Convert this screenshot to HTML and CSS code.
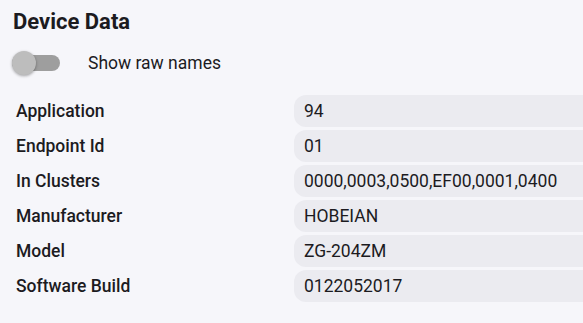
FILE: index.html
```html
<!DOCTYPE html>
<html>
  <head>
    <meta name="viewport" content="width=device-width, initial-scale=1" />
    <link rel="stylesheet" href="styles.css">
  </head>
  <body>
    <div class="panel">
      <h2 class="title">Device Data</h2>

      <label class="switch-row">
        <span class="switch">
          <span class="track"></span>
          <span class="thumb"></span>
        </span>
        <span class="switch-label">Show raw names</span>
      </label>

      <div class="data-grid">
        <div class="key">Application</div>
        <div class="value">94</div>
        <div class="key">Endpoint Id</div>
        <div class="value">01</div>
        <div class="key">In Clusters</div>
        <div class="value">0000,0003,0500,EF00,0001,0400</div>
        <div class="key">Manufacturer</div>
        <div class="value">HOBEIAN</div>
        <div class="key">Model</div>
        <div class="value">ZG-204ZM</div>
        <div class="key">Software Build</div>
        <div class="value">0122052017</div>
      </div>
    </div>
  </body>
</html>
```

FILE: styles.css
```css
body {
  margin: 0;
  font-family: Roboto, "Liberation Sans", sans-serif;
  background-color: #f6f6fa;
  color: #1c1b1f;
}

* {
  box-sizing: border-box;
}

.panel {
  padding: 8px 0 0 0;
}

/* Section heading */
.title {
  margin: 0 0 0 13px;
  font-size: 22px;
  font-weight: 700;
  line-height: 28px;
}

/* Toggle switch */
.switch-row {
  display: flex;
  align-items: center;
  height: 38px;
  margin: 8px 0 13px 12px;
}

.switch {
  position: relative;
  width: 48px;
  height: 24px;
  display: inline-block;
}

.track {
  position: absolute;
  left: 0;
  top: 4px;
  width: 48px;
  height: 16px;
  border-radius: 8px;
  background-color: #9e9e9e;
}

.thumb {
  position: absolute;
  left: 0;
  top: 0;
  width: 24px;
  height: 24px;
  border-radius: 50%;
  background-color: #bdbdbd;
  box-shadow: 0 1px 3px rgba(0, 0, 0, 0.35);
}

.switch-label {
  margin-left: 28px;
  font-size: 17.5px;
}

/* Key / value list */
.data-grid {
  display: grid;
  grid-template-columns: 294px 1fr;
  grid-auto-rows: 32px;
  row-gap: 3px;
  font-size: 17.5px;
}

.key {
  display: flex;
  align-items: center;
  padding-left: 16px;
  font-weight: 500;
}

.value {
  display: flex;
  align-items: center;
  padding-left: 10px;
  background-color: #ebebf0;
  border-radius: 12px 0 0 12px;
}
```
